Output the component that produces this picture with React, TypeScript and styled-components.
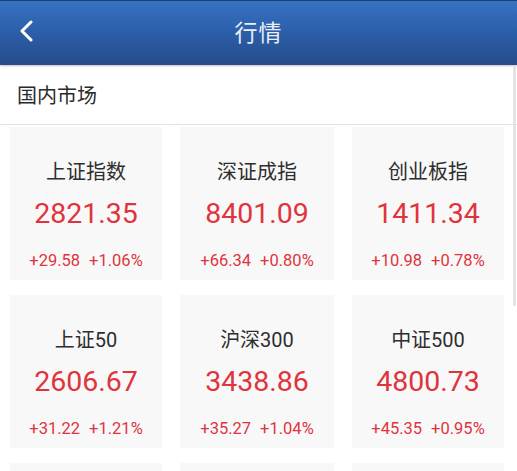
import styled, { createGlobalStyle } from "styled-components";

const GlobalStyle = createGlobalStyle`
  html, body {
    margin: 0;
    padding: 0;
    background: #ffffff;
    font-family: Roboto, "Noto Sans CJK SC", sans-serif;
  }
`;

const Page = styled.div`
  position: relative;
  width: 517px;
  height: 471px;
  overflow: hidden;
  background: #ffffff;
`;

const Header = styled.header`
  height: 65px;
  display: flex;
  align-items: center;
  border-top: 1px solid #1f3f70;
  box-sizing: border-box;
  background: linear-gradient(to bottom, #3672c2 0%, #2c5ea8 50%, #264c8a 100%);
  box-shadow: 0 1px 2px rgba(0, 0, 0, 0.25);
`;

const BackButton = styled.button`
  width: 56px;
  height: 64px;
  border: none;
  background: none;
  padding: 0 0 4px 18px;
  display: flex;
  align-items: center;
  cursor: pointer;
`;

const Title = styled.h1`
  flex: 1;
  margin: 0 0 5px;
  text-align: center;
  font-family: "Noto Sans CJK SC", sans-serif;
  font-size: 23px;
  font-weight: 400;
  color: #e9eef7;
  letter-spacing: 1px;
`;

const Spacer = styled.div`
  width: 56px;
`;

const SectionBar = styled.div`
  height: 59px;
  display: flex;
  align-items: center;
  padding-left: 17px;
  border-bottom: 1px solid #e2e2e2;
  font-family: "Noto Sans CJK SC", sans-serif;
  font-size: 20px;
  color: #2a2a2a;
`;

const Grid = styled.div`
  display: grid;
  grid-template-columns: 152px 154px 152px;
  column-gap: 18px;
  row-gap: 15px;
  padding: 2px 10px 0;
`;

const Card = styled.div`
  height: 153px;
  background: #f8f8f8;
  display: flex;
  flex-direction: column;
  align-items: center;
`;

const Name = styled.div`
  margin-top: 31px;
  height: 28px;
  line-height: 28px;
  font-size: 20px;
  color: #2e2e2e;
`;

const Price = styled.div`
  margin-top: 11px;
  height: 34px;
  line-height: 34px;
  font-size: 28.5px;
  color: #e0343d;
`;

const Changes = styled.div`
  margin-top: 20px;
  display: flex;
  gap: 9px;
  font-size: 16.5px;
  line-height: 20px;
  color: #e0343d;
`;

const ScrollThumb = styled.div`
  position: absolute;
  right: 1px;
  top: 66px;
  width: 3px;
  height: 240px;
  background: #e4e4e4;
`;

const quotes = [
  { name: "上证指数", price: "2821.35", diff: "+29.58", pct: "+1.06%" },
  { name: "深证成指", price: "8401.09", diff: "+66.34", pct: "+0.80%" },
  { name: "创业板指", price: "1411.34", diff: "+10.98", pct: "+0.78%" },
  { name: "上证50", price: "2606.67", diff: "+31.22", pct: "+1.21%" },
  { name: "沪深300", price: "3438.86", diff: "+35.27", pct: "+1.04%" },
  { name: "中证500", price: "4800.73", diff: "+45.35", pct: "+0.95%" },
  { name: "", price: "", diff: "", pct: "" },
  { name: "", price: "", diff: "", pct: "" },
  { name: "", price: "", diff: "", pct: "" },
];

function App() {
  return (
    <Page>
      <GlobalStyle />
      <Header>
        <BackButton aria-label="返回">
          <svg width="16" height="22" viewBox="0 0 16 22">
            <path
              d="M13 2 L4 11 L13 20"
              fill="none"
              stroke="#ffffff"
              strokeWidth="3"
              strokeLinecap="round"
              strokeLinejoin="round"
            />
          </svg>
        </BackButton>
        <Title>行情</Title>
        <Spacer />
      </Header>
      <SectionBar>国内市场</SectionBar>
      <Grid>
        {quotes.map((q, i) => (
          <Card key={i}>
            {q.name && (
              <>
                <Name>{q.name}</Name>
                <Price>{q.price}</Price>
                <Changes>
                  <span>{q.diff}</span>
                  <span>{q.pct}</span>
                </Changes>
              </>
            )}
          </Card>
        ))}
      </Grid>
      <ScrollThumb />
    </Page>
  );
}

export default App;
